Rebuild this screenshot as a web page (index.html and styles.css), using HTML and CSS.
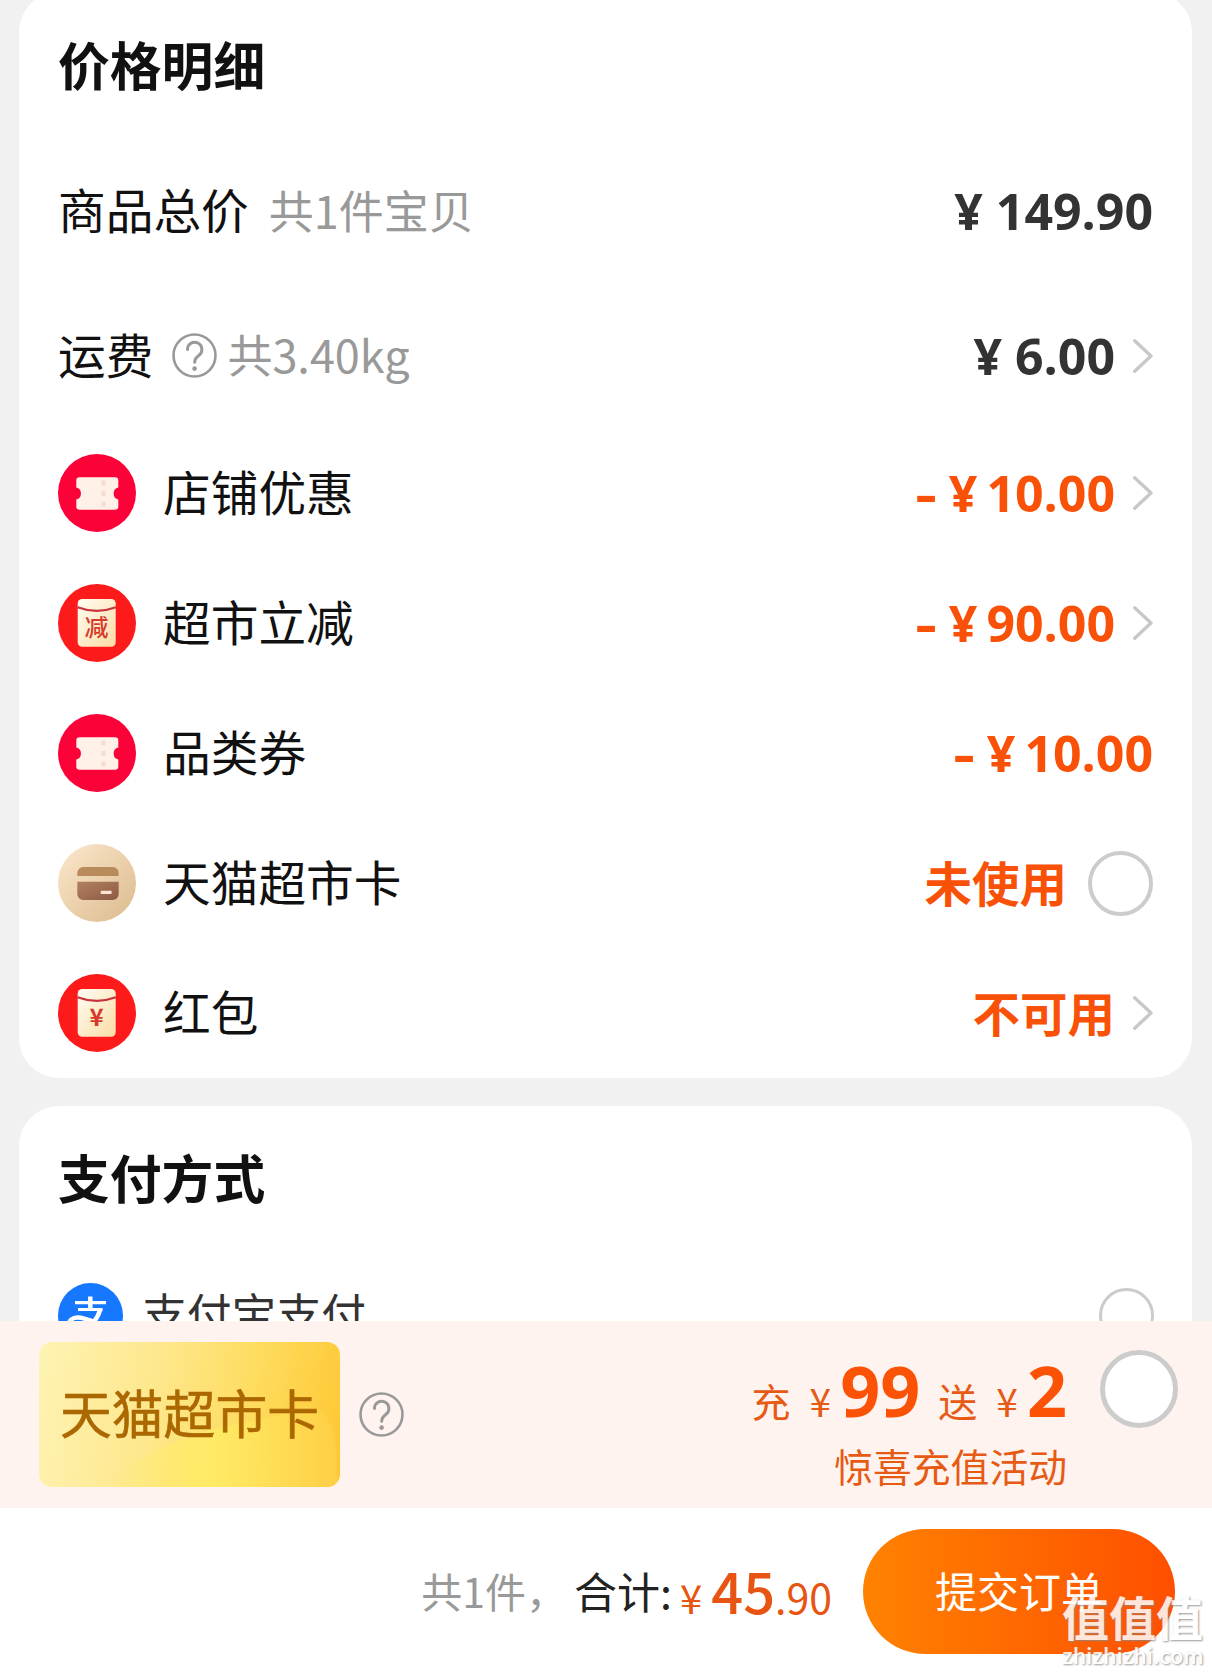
FILE: index.html
```html
<!DOCTYPE html>
<html lang="zh-CN">
<head>
<meta charset="utf-8">
<title>确认订单</title>
<link rel="stylesheet" href="styles.css">
</head>
<body>
<svg class="defs" width="0" height="0" aria-hidden="true">
  <defs>
    <linearGradient id="cream" x1="0" y1="0" x2="1" y2="1"><stop offset="0" stop-color="#fffdf4"/><stop offset="1" stop-color="#fbdda4"/></linearGradient>
    <linearGradient id="sand" x1="0" y1="0" x2="1" y2="1"><stop offset="0" stop-color="#fbe8cc"/><stop offset="1" stop-color="#dcba8e"/></linearGradient>
    <linearGradient id="brown" x1="0" y1="0" x2="1" y2="1"><stop offset="0" stop-color="#b58061"/><stop offset="1" stop-color="#8a5a42"/></linearGradient>
    <linearGradient id="wave" x1="0" y1="0" x2="1" y2="0"><stop offset="0" stop-color="#ffee6c" stop-opacity="0"/><stop offset="0.450" stop-color="#ffec66" stop-opacity="0.900"/><stop offset="1" stop-color="#fecf45"/></linearGradient>
    <symbol id="ticket" viewBox="0 0 78 78">
      <circle cx="39" cy="39" r="39" fill="#fb0239"/>
      <path d="M21.500 23.300h35.600a3.200 3.200 0 0 1 3.200 3.200v7a6.200 6.200 0 0 0 0 12v7a3.200 3.200 0 0 1-3.200 3.200H21.500a3.200 3.200 0 0 1-3.200-3.200v-7a6.200 6.200 0 0 0 0-12v-7a3.200 3.200 0 0 1 3.200-3.200z" fill="#fff1e8"/>
      <path d="M45.500 26.500v28" stroke="#f5dccf" stroke-width="4" stroke-dasharray="5 5.500" fill="none"/>
    </symbol>
    <symbol id="packet" viewBox="0 0 78 78">
      <circle cx="39" cy="39" r="39" fill="#fd1a1b"/>
      <rect x="19.700" y="15" width="38" height="47.700" rx="4.500" fill="url(#cream)"/>
      <path d="M19.500 23.300Q38.700 30.500 57.900 23.300" stroke="#c8323a" stroke-width="2.200" fill="none"/>
    </symbol>
    <symbol id="card" viewBox="0 0 78 78">
      <circle cx="39" cy="39" r="39" fill="url(#sand)"/>
      <path d="M19.300 32v-3a6 6 0 0 1 6-6h29.400a6 6 0 0 1 6 6v3z" fill="#b98a5c"/>
      <path d="M19.300 37.700h41.400V50a6 6 0 0 1-6 6H25.300a6 6 0 0 1-6-6z" fill="url(#brown)"/>
      <rect x="42.700" y="46.700" width="11" height="3.400" rx="1" fill="#f9e6d2"/>
    </symbol>
    <symbol id="help" viewBox="0 0 45 45">
      <circle cx="22.500" cy="22.500" r="21" fill="none" stroke="#999" stroke-width="2.600"/>
      <path d="M15.500 16.500a7.200 7.200 0 1 1 11.500 5.700c-2.700 2-4.300 3.300-4.300 7" fill="none" stroke="#999" stroke-width="3" stroke-linecap="round"/>
      <circle cx="22.600" cy="35.600" r="2.300" fill="#999"/>
    </symbol>
    <symbol id="chevron" viewBox="0 0 20 34">
      <path d="M1.700 1.800L18 17 1.700 32.200" fill="none" stroke="#c8c8c8" stroke-width="3.400" stroke-linejoin="round" stroke-linecap="round"/>
    </symbol>
  </defs>
</svg>

<main class="page">
  <section class="panel price-panel">
    <h2 class="title">价格明细</h2>
    <div class="row plain">
      <span class="label">商品总价</span><span class="note">共1件宝贝</span>
      <span class="price dark end"><span class="yen wide">¥</span>149.90</span>
    </div>
    <div class="row plain">
      <span class="label">运费</span><svg class="help"><use href="#help"/></svg><span class="note weight">共3.40kg</span>
      <span class="price dark end"><span class="yen wide">¥</span>6.00</span><svg class="chevron"><use href="#chevron"/></svg>
    </div>
    <div class="row">
      <svg class="icon"><use href="#ticket"/></svg><span class="label">店铺优惠</span>
      <span class="price end"><span class="minus">-</span><span class="yen">¥</span>10.00</span><svg class="chevron"><use href="#chevron"/></svg>
    </div>
    <div class="row">
      <span class="icon packet"><svg class="icon-bg"><use href="#packet"/></svg><span class="packet-text">减</span></span><span class="label">超市立减</span>
      <span class="price end"><span class="minus">-</span><span class="yen">¥</span>90.00</span><svg class="chevron"><use href="#chevron"/></svg>
    </div>
    <div class="row">
      <svg class="icon"><use href="#ticket"/></svg><span class="label">品类券</span>
      <span class="price end"><span class="minus">-</span><span class="yen">¥</span>10.00</span>
    </div>
    <div class="row">
      <svg class="icon"><use href="#card"/></svg><span class="label">天猫超市卡</span>
      <span class="state end">未使用</span><span class="radio"></span>
    </div>
    <div class="row">
      <span class="icon packet"><svg class="icon-bg"><use href="#packet"/></svg><span class="packet-text yuan">¥</span></span><span class="label">红包</span>
      <span class="state end">不可用</span><svg class="chevron"><use href="#chevron"/></svg>
    </div>
  </section>

  <section class="panel pay-panel">
    <h2 class="title pay-title">支付方式</h2>
    <div class="row pay-row">
      <svg class="alipay" viewBox="0 0 65 65">
        <circle cx="32.500" cy="32.500" r="32.500" fill="#1677ff"/>
        <g fill="none" stroke="#fff" stroke-width="3.200">
          <path d="M17 19.700h31M20 26.500h24.500"/>
          <path d="M32.300 13.500v13" stroke-width="4.500"/>
          <path d="M42.500 26c-3 10-11 22-23 22-12 0-11-13.500 0-13.500 10 0 22 7 44 15" stroke-width="4.400"/>
        </g>
      </svg>
      <span class="pay-name">支付宝支付</span>
      <span class="radio small end"></span>
    </div>
  </section>

  <section class="promo">
    <div class="gift-card">
      <svg class="gift-wave" viewBox="0 0 301 145"><path d="M70 145C110 95 190 84 240 74 262 62 294 52 298 115V145z" fill="url(#wave)"/></svg>
      <span class="gift-name">天猫超市卡</span>
    </div>
    <svg class="help"><use href="#help"/></svg>
    <div class="offer">
      <div class="offer-main"><span>充</span><span class="offer-yen">¥</span><b>99</b><span class="give">送</span><span class="offer-yen">¥</span><b>2</b></div>
      <div class="offer-sub">惊喜充值活动</div>
    </div>
    <span class="radio large"></span>
  </section>

  <footer class="bar">
    <span class="count">共1件，</span>
    <span class="total">合计:</span>
    <span class="sum"><span class="sum-yen">¥</span><span class="sum-int">45</span><span class="sum-dec">.90</span></span>
    <button class="submit">提交订单</button>
    <div class="mark"><span class="mark-logo">值值值</span><span class="mark-url">zhizhizhi.com</span></div>
  </footer>
</main>
</body>
</html>
```

FILE: styles.css
```css
* { box-sizing: border-box; }

body {
  margin: 0;
  background: #f1f1f1;
  color: #111;
  font-family: "Noto Sans CJK SC", "Noto Sans", sans-serif;
}

.defs { position: absolute; }

.page {
  display: flex;
  flex-direction: column;
  height: 1675px;
  overflow: hidden;
}

.panel {
  flex: none;
  margin: 0 20px 0 19px;
  padding: 0 39px 0 39px;
  background: #fff;
  border-radius: 40px;
}

.price-panel { margin-top: -8px; padding-top: 8px; }

.pay-panel {
  margin-top: 28px;
  height: 215px;
  padding-right: 38px;
  border-radius: 40px 40px 0 0;
  overflow: hidden;
}

.title {
  margin: 0;
  height: 139px;
  font-size: 51.800px;
  font-weight: 700;
  line-height: 127px;
}

.pay-title { height: 172px; line-height: 141px; }

.row {
  display: flex;
  align-items: center;
  height: 130px;
}

.row.plain { height: 144.500px; }
.end { margin-left: auto; }

.label { padding: 0 0 4px; font-size: 47.700px; line-height: 60px; }
.note { padding-bottom: 3px; margin-left: 20px; font-size: 45px; line-height: 60px; color: #999; }
.note.weight { margin-left: 10px; }

.icon { flex: none; width: 78px; height: 78px; margin-right: 27px; }
.packet { position: relative; }
.icon-bg { display: block; width: 78px; height: 78px; }

.packet-text {
  position: absolute;
  left: 0;
  top: 27px;
  width: 77px;
  font-size: 24px;
  line-height: 30px;
  font-weight: 500;
  text-align: center;
  color: #d63a2c;
}

.packet-text.yuan { font-weight: 700; }

.help { flex: none; width: 45px; height: 45px; }
.row .help { margin-left: 19px; }
.chevron { flex: none; width: 20px; height: 34px; margin-left: 18px; }

.price {
  display: flex;
  font-family: "Open Sans", "Noto Sans", sans-serif;
  font-size: 50px;
  font-weight: 700;
  line-height: 60px;
  color: #f95208;
}

.price.dark { color: #333; }
.yen { margin-right: 9px; }
.yen.wide { margin-right: 13px; }
.minus { margin-right: 15px; transform: scaleX(1.350); }

.state { padding-bottom: 3px; font-size: 47.500px; font-weight: 700; line-height: 60px; color: #f95208; }

.radio {
  flex: none;
  width: 65px;
  height: 65px;
  margin-left: 21px;
  border: 4px solid #ccc;
  border-radius: 50%;
  background: #fff;
}

.radio.small { width: 55px; height: 55px; border-width: 3px; margin-left: auto; }
.radio.large { width: 78px; height: 78px; border-width: 5px; margin: 29px 0 0 33px; }

.pay-row { height: 75px; }
.alipay { flex: none; width: 65px; height: 65px; }
.pay-name { padding-bottom: 8px; margin-left: 19px; font-size: 44.800px; line-height: 60px; color: #333; }

.promo {
  flex: none;
  display: flex;
  height: 187px;
  padding: 0 34px 0 39px;
  background: #fff3ef;
}

.gift-card {
  position: relative;
  flex: none;
  width: 301px;
  height: 145px;
  margin-top: 21px;
  padding-left: 21px;
  border-radius: 13px;
  overflow: hidden;
  background: linear-gradient(100deg, #fef3b4 0%, #fee78a 40%, #fedc5f 68%, #fec732 100%);
  color: #ab6700;
  font-size: 51.800px;
  line-height: 139px;
  white-space: nowrap;
}

.gift-wave { position: absolute; left: 0; top: 0; width: 301px; height: 145px; }
.gift-name { position: relative; -webkit-text-stroke: 0.600px #ab6700; }

.promo .help { margin: 71px 0 0 19px; }

.offer { margin-left: auto; color: #e65a14; text-align: right; }

.offer-main {
  display: flex;
  align-items: baseline;
  justify-content: flex-end;
  height: 116px;
  padding-top: 29px;
  font-size: 39px;
  line-height: 100px;
}

.offer-main b { font-family: "Open Sans", sans-serif; font-size: 70px; line-height: 80px; color: #fc5205; }
.offer-yen { margin: 0 9px 0 19px; font-size: 39px; }
.give { margin-left: 18px; }
.offer-sub { font-size: 38.800px; line-height: 57px; }

.bar {
  position: relative;
  flex: 1;
  display: flex;
  align-items: center;
  justify-content: flex-end;
  padding-right: 37px;
  background: #fff;
}

.count { padding-bottom: 4px; font-size: 41px; color: #999; }
.total { padding-bottom: 3px; margin-left: 7px; font-size: 43px; color: #222; }
.sum { padding-bottom: 5px; margin-left: 8px; color: #e85412; }
.sum-yen { margin-right: 9px; font-size: 40px; }
.sum-int { font-size: 56px; font-weight: 500; }
.sum-dec { font-size: 41px; }

.submit {
  width: 312px;
  height: 125px;
  margin-left: 31px;
  padding: 0 0 4px;
  border: 0;
  border-radius: 63px;
  background: linear-gradient(90deg, #ff8200, #ff4f00);
  color: #fff;
  font: 400 42px/60px "Noto Sans CJK SC", sans-serif;
}

.mark {
  position: absolute;
  right: 8px;
  bottom: 6px;
  width: 142px;
  color: #fff;
  text-shadow: 1px 1px 2px #8a8a8a;
  white-space: nowrap;
  opacity: 0.850;
}

.mark-logo { display: block; font-size: 47px; line-height: 50px; font-weight: 700; }
.mark-url { display: block; font-size: 21.700px; line-height: 28px; font-weight: 500; }
```
